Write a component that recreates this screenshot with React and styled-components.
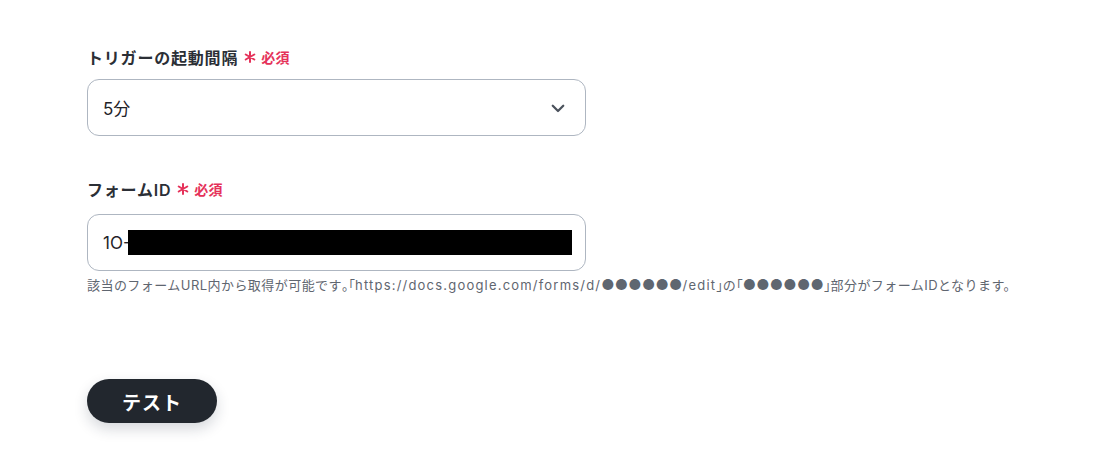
import React from "react";
import styled, { createGlobalStyle } from "styled-components";

const Global = createGlobalStyle`
  html, body { margin: 0; padding: 0; background: #fff; }
  body { font-family: Inter, "Noto Sans CJK JP", sans-serif; color: #2b2f36; }
`;

const Page = styled.div`
  width: 1116px;
  height: 468px;
  box-sizing: border-box;
  padding: 44px 0 0 87px;
  display: flex;
  flex-direction: column;
`;

const Field = styled.div`
  display: flex;
  flex-direction: column;
  margin-bottom: ${(p) => p.$mb || 0}px;
`;

const Label = styled.div`
  display: flex;
  align-items: center;
  font-size: 16px;
  letter-spacing: 0.8px;
  font-weight: 600;
  color: #2b2f36;
  height: 26px;
  margin-bottom: ${(p) => p.$gap}px;
`;

const Required = styled.span`
  display: inline-flex;
  align-items: center;
  color: #e5325a;
  font-size: 14px;
  font-weight: 600;
  letter-spacing: 0.3px;
  margin-left: 6px;
  gap: 5px;
`;

const Box = styled.div`
  width: 499px;
  height: 57px;
  box-sizing: border-box;
  border: 1px solid #aeb6c1;
  border-radius: 12px;
  display: flex;
  align-items: center;
  justify-content: space-between;
  padding: 0 18px 0 15px;
  font-size: 17px;
  color: #1f2328;
  background: #fff;
`;

const Value = styled.span`
  display: inline-flex;
  align-items: center;
`;

const Redact = styled.span`
  display: inline-block;
  width: 444px;
  height: 25px;
  margin-left: -3px;
  background: #000;
`;

const Help = styled.div`
  font-size: 13px;
  line-height: 17px;
  color: #5f6670;
  margin-top: 5px;
  letter-spacing: 0.45px;
  white-space: nowrap;
`;

const Latin = styled.span`
  letter-spacing: 1.2px;
`;

const Bracket = styled.span`
  font-feature-settings: "halt";
  letter-spacing: 0;
`;

const Dots = styled.span`
  font-size: 14.5px;
  letter-spacing: 0.3px;
`;

const Button = styled.button`
  width: 130px;
  height: 44px;
  border: none;
  border-radius: 22px;
  background: #22272e;
  color: #fff;
  font-family: Inter, "Noto Sans CJK JP", sans-serif;
  font-size: 19px;
  font-weight: 700;
  letter-spacing: 1px;
  box-shadow: 0 6px 14px rgba(30, 40, 60, 0.18);
  cursor: pointer;
`;

const Chevron = () => (
  <svg width="18" height="18" viewBox="0 0 24 24" fill="none" stroke="#4b525c" strokeWidth="3" strokeLinecap="round" strokeLinejoin="round">
    <path d="M5 9l7 7 7-7" />
  </svg>
);

const Star = () => (
  <svg width="12" height="12" viewBox="0 0 12 12" stroke="#e5325a" strokeWidth="2" strokeLinecap="round">
    <path d="M6 1v10M1.7 3.5l8.6 5M1.7 8.5l8.6-5" />
  </svg>
);

export default function App() {
  return (
    <>
      <Global />
      <Page>
        <Field $mb={40}>
          <Label $gap={9}>
            トリガーの起動間隔
            <Required>
              <Star />
              必須
            </Required>
          </Label>
          <Box>
            <Value>5分</Value>
            <Chevron />
          </Box>
        </Field>
        <Field $mb={85}>
          <Label $gap={12}>
            フォームID
            <Required>
              <Star />
              必須
            </Required>
          </Label>
          <Box>
            <Value>
              1O-
              <Redact />
            </Value>
          </Box>
          <Help>
            該当のフォームURL内から取得が可能です<Bracket>。「</Bracket>
            <Latin>https://docs.google.com/forms/d/</Latin>
            <Dots>●●●●●●</Dots>
            <Latin>/edit</Latin>
            <Bracket>」</Bracket>の<Bracket>「</Bracket>
            <Dots>●●●●●●</Dots>
            <Bracket>」</Bracket>部分がフォームIDとなります。
          </Help>
        </Field>
        <div>
          <Button>テスト</Button>
        </div>
      </Page>
    </>
  );
}
